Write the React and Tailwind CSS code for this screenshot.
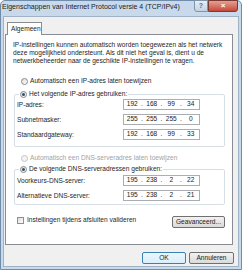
import React from 'react';

const Radio = ({ checked, disabled }) => (
  <span
    className={`inline-flex items-center justify-center w-[7px] h-[7px] rounded-full border ${
      disabled ? 'border-[#c4c4c4] bg-[#f4f4f4]' : 'border-[#8a8a8a] bg-gradient-to-br from-[#dcdcdc] to-white'
    }`}
  >
    {checked && <span className="w-[3px] h-[3px] rounded-full bg-[#2f4d72]" />}
  </span>
);

const IpField = ({ parts }) => (
  <div className="w-[77px] h-[11px] bg-white border border-[#abadb3] flex items-center text-[6.6px] leading-none text-[#222]">
    {parts.map((p, i) => (
      <React.Fragment key={i}>
        <span className="flex-1 text-center">{p}</span>
        {i < 3 && <span className="w-[3px] text-center">.</span>}
      </React.Fragment>
    ))}
  </div>
);

const Row = ({ label, parts }) => (
  <div className="flex items-center pl-[2px]">
    <span className="w-[106px]">{label}</span>
    <IpField parts={parts} />
  </div>
);

const Btn = ({ children, w, primary }) => (
  <button
    className={`h-[12px] ${w} rounded-[2px] border text-[6.6px] leading-none text-[#222] bg-gradient-to-b ${
      primary ? 'border-[#3c7fb1] from-[#eaf6fd] to-[#d9eefb]' : 'border-[#707070] from-[#f2f2f2] to-[#dadada]'
    }`}
  >
    {children}
  </button>
);

export default function App() {
  return (
    <div className="w-[242px] h-[280px] bg-white font-['Liberation_Sans',Arial,sans-serif] text-[6.6px] leading-[8px] text-[#262626]">
      <div className="h-[270px] bg-[#c8d9ec] border border-[#6f8cab] rounded-t-[5px] flex flex-col px-[2px] pb-[2px]">
        {/* title bar */}
        <div className="h-[15px] flex items-start">
          <div className="pt-[2px] -ml-[1px] text-[7px] text-[#1b1b1b]">
            Eigenschappen van Internet Protocol versie 4 (TCP/IPv4)
          </div>
          <div className="ml-auto mr-[1px] -mt-[1px] flex">
            <div className="w-[14px] h-[12px] border border-[#7f93ab] rounded-bl-[3px] bg-gradient-to-b from-[#e7eef6] to-[#c3d2e2] flex items-center justify-center text-[7px] font-bold text-[#5b6f87]">
              ?
            </div>
            <div className="w-[30px] h-[12px] border border-[#7a3a34] rounded-br-[3px] bg-gradient-to-b from-[#e5a093] to-[#c4473b] flex items-center justify-center text-[8px] font-bold text-white">
              ×
            </div>
          </div>
        </div>

        {/* client area */}
        <div className="flex-1 bg-[#f0f0f0] border border-[#9fb2c6] flex flex-col">
          <div className="pt-[4px] pl-[3px]">
            <div className="w-[35px] h-[13px] bg-white border border-b-0 border-[#898c95] flex items-center pl-[3px] relative top-[1px]">
              Algemeen
            </div>
          </div>

          <div className="ml-[1px] w-[228px] h-[211px] bg-white border border-[#898c95] flex flex-col">
            <p className="pt-[6px] pl-[7px]">
              IP-instellingen kunnen automatisch worden toegewezen als het netwerk
              <br />
              deze mogelijkheid ondersteunt. Als dit niet het geval is, dient u de
              <br />
              netwerkbeheerder naar de geschikte IP-instellingen te vragen.
            </p>

            <div className="mt-[11px] h-[10px] flex items-center pl-[15px] gap-[2px]">
              <Radio />
              <span>Automatisch een IP-adres laten toewijzen</span>
            </div>

            <fieldset className="mt-[3px] ml-[8px] w-[211px] border border-[#d5dfe5] rounded-[2px] pb-[6px] flex flex-col gap-[4px]">
              <legend className="ml-[4px] px-[1px]">
                <span className="h-[10px] inline-flex items-center gap-[2px]">
                  <Radio checked />
                  <span>Het volgende IP-adres gebruiken:</span>
                </span>
              </legend>
              <Row label="IP-adres:" parts={['192', '168', '99', '34']} />
              <Row label="Subnetmasker:" parts={['255', '255', '255', '0']} />
              <Row label="Standaardgateway:" parts={['192', '168', '99', '33']} />
            </fieldset>

            <div className="mt-[6px] h-[10px] flex items-center pl-[15px] gap-[2px] text-[#a3a3a3]">
              <Radio disabled />
              <span>Automatisch een DNS-serveradres laten toewijzen</span>
            </div>

            <fieldset className="mt-[1px] ml-[8px] w-[211px] border border-[#d5dfe5] rounded-[2px] pb-[3px] flex flex-col gap-[4px]">
              <legend className="ml-[4px] px-[1px] mb-[1px]">
                <span className="h-[10px] inline-flex items-center gap-[2px]">
                  <Radio checked />
                  <span>De volgende DNS-serveradressen gebruiken:</span>
                </span>
              </legend>
              <Row label="Voorkeurs-DNS-server:" parts={['195', '238', '2', '22']} />
              <Row label="Alternatieve DNS-server:" parts={['195', '238', '2', '21']} />
            </fieldset>

            <div className="mt-[10px] flex items-start justify-between pl-[11px] pr-[7px]">
              <div className="h-[10px] flex items-center gap-[3px]">
                <span className="w-[7px] h-[7px] border border-[#8e8f8f] bg-gradient-to-br from-[#dcdcdc] to-white" />
                <span>Instellingen tijdens afsluiten valideren</span>
              </div>
              <div className="mt-[1px]">
                <Btn w="w-[53px]">Geavanceerd...</Btn>
              </div>
            </div>
          </div>

          <div className="mt-[7px] flex justify-end gap-[3px] pr-[4px]">
            <Btn w="w-[44px]" primary>OK</Btn>
            <Btn w="w-[45px]">Annuleren</Btn>
          </div>
        </div>
      </div>
    </div>
  );
}
